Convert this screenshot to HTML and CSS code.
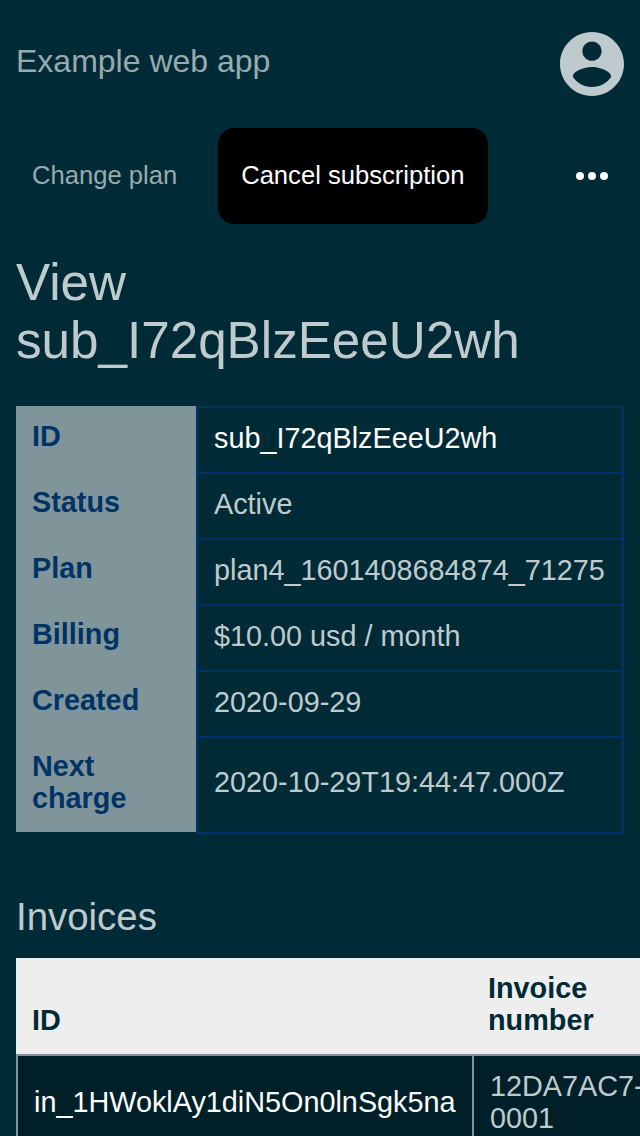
FILE: index.html
```html
<!DOCTYPE html>
<html lang="en">
<head>
<meta charset="utf-8">
<title>Example web app</title>
<link rel="stylesheet" href="styles.css">
</head>
<body>
<header class="header">
  <span class="brand">Example web app</span>
  <svg class="avatar" viewBox="2 2 20 20" aria-label="Account">
    <path d="M12 2C6.480 2 2 6.480 2 12s4.480 10 10 10 10-4.480 10-10S17.520 2 12 2zm0 3c1.660 0 3 1.340 3 3s-1.340 3-3 3-3-1.340-3-3 1.340-3 3-3zm0 14.200c-2.500 0-4.710-1.280-6-3.220.03-1.990 4-3.080 6-3.080 1.990 0 5.970 1.090 6 3.080-1.290 1.940-3.500 3.220-6 3.220z"/>
  </svg>
</header>
<nav class="nav">
  <a class="nav-link">Change plan</a>
  <a class="nav-link active">Cancel subscription</a>
  <svg class="more" viewBox="0 0 32 8" aria-label="More">
    <circle cx="4" cy="4" r="4"/><circle cx="16" cy="4" r="4"/><circle cx="28" cy="4" r="4"/>
  </svg>
</nav>
<main class="content">
  <h1 class="title">View sub_I72qBlzEeeU2wh</h1>
  <dl class="details">
    <div class="row"><dt>ID</dt><dd class="link">sub_I72qBlzEeeU2wh</dd></div>
    <div class="row"><dt>Status</dt><dd>Active</dd></div>
    <div class="row"><dt>Plan</dt><dd>plan4_1601408684874_71275</dd></div>
    <div class="row"><dt>Billing</dt><dd>$10.00 usd / month</dd></div>
    <div class="row"><dt>Created</dt><dd>2020-09-29</dd></div>
    <div class="row"><dt>Next charge</dt><dd>2020-10-29T19:44:47.000Z</dd></div>
  </dl>
  <h2 class="subtitle">Invoices</h2>
  <div class="invoices">
    <div class="head">ID</div>
    <div class="head">Invoice<br>number</div>
    <div class="cell link">in_1HWoklAy1diN5On0lnSgk5na</div>
    <div class="cell">12DA7AC7-<br>0001</div>
  </div>
</main>
</body>
</html>
```
FILE: styles.css
```css
* { box-sizing: border-box; }
html, body { height: 100%; overflow: hidden; }
body {
  margin: 0;
  background: #002b36;
  color: #bfcacd;
  font: 28.8px/32px "Liberation Sans", Arial, sans-serif;
}
.header {
  height: 128px;
  padding: 0 16px;
  display: flex;
  align-items: center;
  justify-content: space-between;
}
.brand { font-size: 32px; line-height: 36px; padding-bottom: 6px; color: #99aaaf; }
.avatar { width: 64px; height: 64px; fill: #bfcacd; }
.nav {
  height: 96px;
  padding: 0 32px 0 9px;
  display: flex;
  align-items: center;
}
.nav-link {
  height: 96px;
  padding: 33px 23px 0;
  font-size: 25.6px;
  line-height: 28px;
  color: #99aaaf;
  border-radius: 16px;
  white-space: nowrap;
}
.active { margin-left: 18px; width: 270px; background: #000; color: #fff; }
.more { width: 32px; height: 8px; margin-left: auto; fill: #fff; }
.content { padding: 30px 16px 0; }
.title { margin: 0; font-size: 51.2px; line-height: 58px; font-weight: 400; }
.details { margin: 36px 0 0; border-bottom: 2px solid transparent; }
.row { display: grid; grid-template-columns: 180px 428px; min-height: 66px; }
dt { padding: 14px 16px; background: #80959a; color: #036; font-weight: 700; }
dd {
  margin: 0 0 -2px;
  padding: 0 16px 4px;
  border: 2px solid #036;
  display: flex;
  align-items: center;
  white-space: nowrap;
}
.row:last-child { min-height: 96px; }
.row:last-child dd { padding-bottom: 6px; }
.link { color: #fff; }
.subtitle { margin: 61px 0 0; font-size: 38.4px; line-height: 44px; font-weight: 400; }
.invoices {
  margin: 19px -16px 0 0;
  display: grid;
  grid-template-columns: 456px 168px;
  overflow: hidden;
}
.head {
  height: 96px;
  padding: 14px 16px 18px;
  display: flex;
  align-items: flex-end;
  background: #eee;
  color: #002b36;
  font-weight: 700;
}
.cell {
  height: 96px;
  padding: 0 16px;
  display: flex;
  align-items: center;
  border: 2px solid #80959a;
  border-right: 0;
  background: #002029;
  white-space: nowrap;
}
```
